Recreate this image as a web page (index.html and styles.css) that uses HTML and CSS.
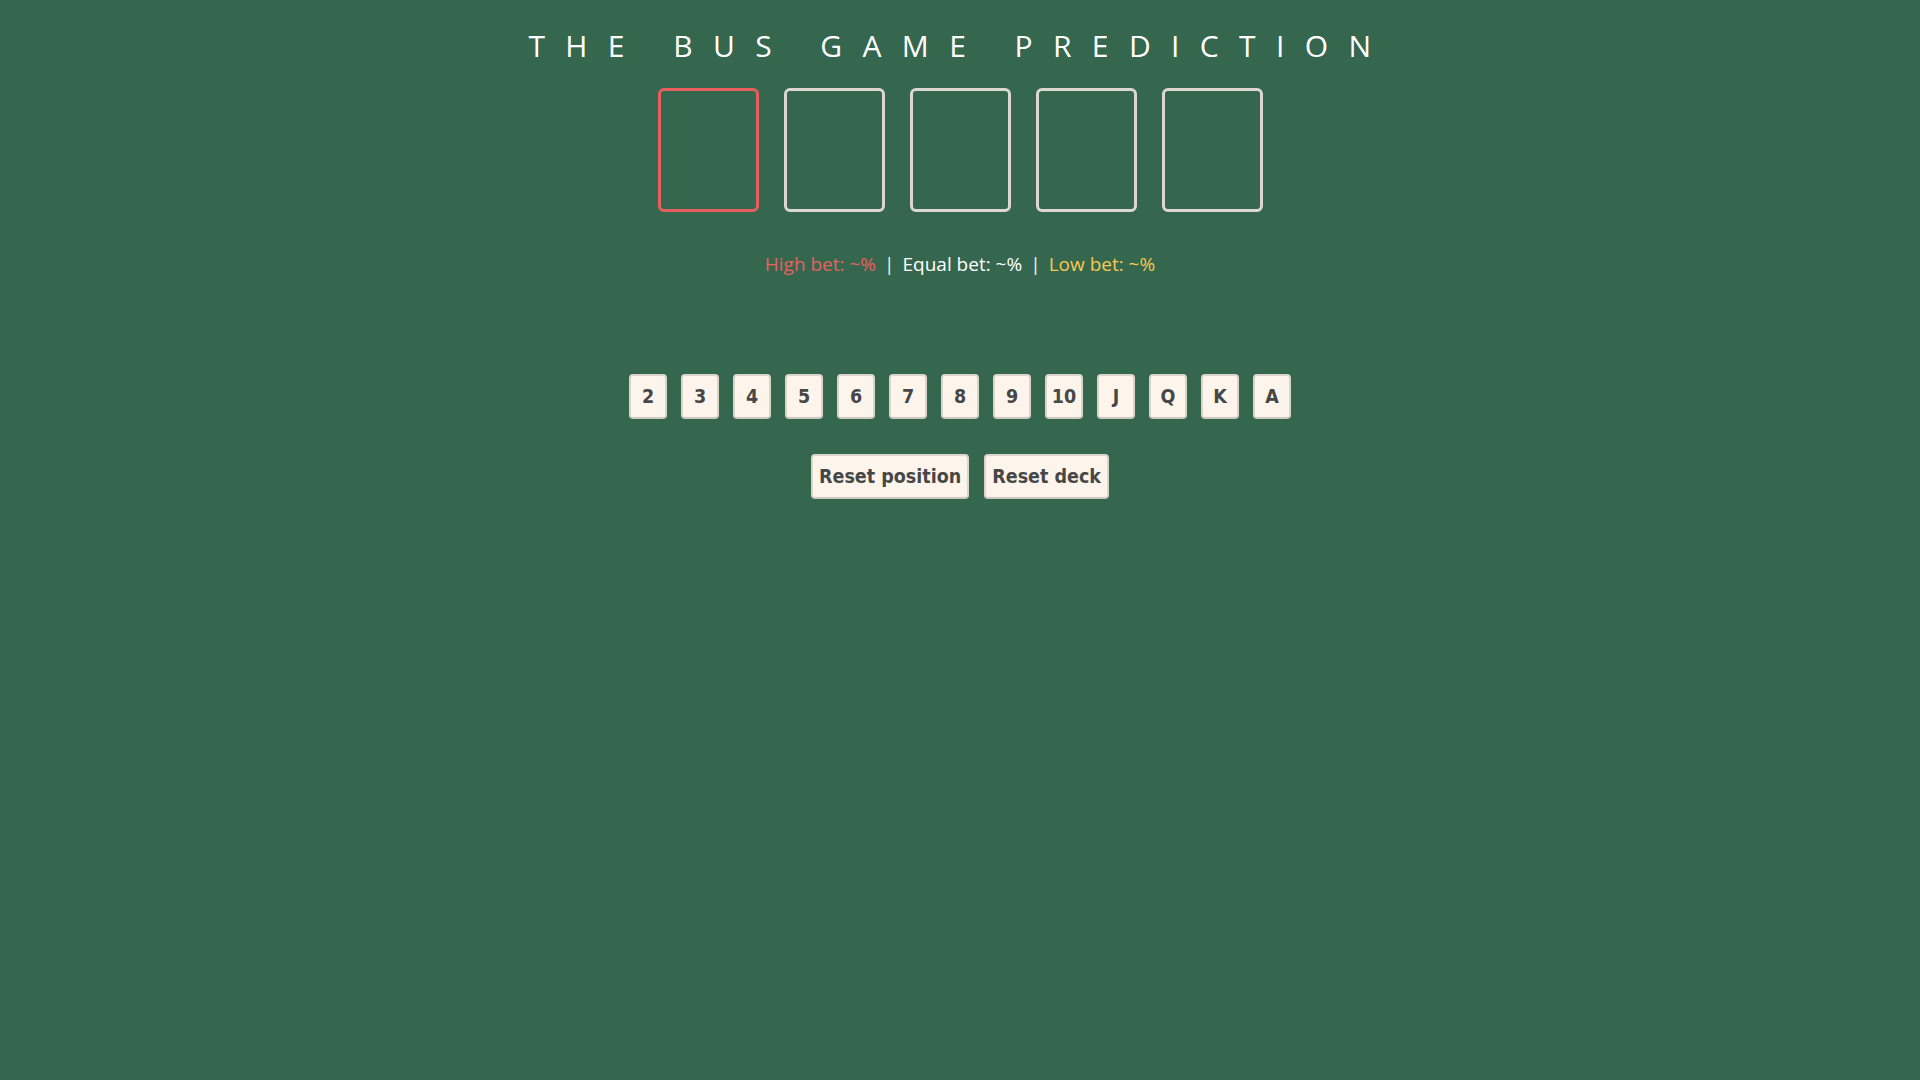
FILE: index.html
```html
<!DOCTYPE html>
<html lang="en">
<head>
<meta charset="utf-8">
<title>The Bus Game Prediction</title>
<link rel="stylesheet" href="styles.css">
</head>
<body>
<main class="app">
  <h1 class="title">THE BUS GAME PREDICTION</h1>
  <div class="slots">
    <div class="slot slot-active"></div>
    <div class="slot"></div>
    <div class="slot"></div>
    <div class="slot"></div>
    <div class="slot"></div>
  </div>
  <p class="odds">
    <span class="odds-high">High bet: ~%</span>
    <span class="sep">|</span>
    <span class="odds-equal">Equal bet: ~%</span>
    <span class="sep">|</span>
    <span class="odds-low">Low bet: ~%</span>
  </p>
  <div class="ranks">
    <button class="rank">2</button>
    <button class="rank">3</button>
    <button class="rank">4</button>
    <button class="rank">5</button>
    <button class="rank">6</button>
    <button class="rank">7</button>
    <button class="rank">8</button>
    <button class="rank">9</button>
    <button class="rank">10</button>
    <button class="rank">J</button>
    <button class="rank">Q</button>
    <button class="rank">K</button>
    <button class="rank">A</button>
  </div>
  <div class="actions">
    <button class="action">Reset position</button>
    <button class="action">Reset deck</button>
  </div>
</main>
</body>
</html>
```
FILE: styles.css
```css
html, body {
  margin: 0;
  padding: 0;
  height: 100%;
}
body {
  background: #35664e;
  font-family: "Open Sans", "Noto Sans", sans-serif;
  color: #ffffff;
}
.app {
  display: flex;
  flex-direction: column;
  align-items: center;
}
.title {
  margin: 25px 0 0 0;
  font-size: 30px;
  font-weight: 400;
  letter-spacing: 20.4px;
  line-height: 41px;
  color: #ffffff;
}
.slots {
  display: flex;
  gap: 25px;
  margin-top: 22px;
}
.slot {
  box-sizing: border-box;
  width: 101px;
  height: 124px;
  border: 3px solid #ddd8cf;
  border-radius: 6px;
}
.slot-active {
  border-color: #e85e5e;
}
.odds {
  margin: 40px 0 0 0;
  font-size: 19px;
  line-height: 25px;
  display: flex;
  gap: 7px;
}
.odds-high { color: #e86161; }
.odds-equal { color: #ffffff; }
.odds-low { color: #f6c94e; }
.sep { color: #f4f4f4; padding: 0 1px; }
.ranks {
  display: flex;
  gap: 14px;
  margin-top: 97px;
}
.rank, .action {
  box-sizing: border-box;
  height: 45px;
  background: #fdf5ec;
  border: 2px solid #dcd5cc;
  border-bottom-color: #cfc8bf;
  border-radius: 4px;
  font-family: "DejaVu Sans Condensed", "DejaVu Sans", sans-serif;
  font-weight: 700;
  font-size: 19.5px;
  color: #474747;
  padding: 0 6px;
  cursor: pointer;
}
.rank {
  width: 38px;
  padding: 0;
}
.actions {
  display: flex;
  gap: 15px;
  margin-top: 35px;
}
```
